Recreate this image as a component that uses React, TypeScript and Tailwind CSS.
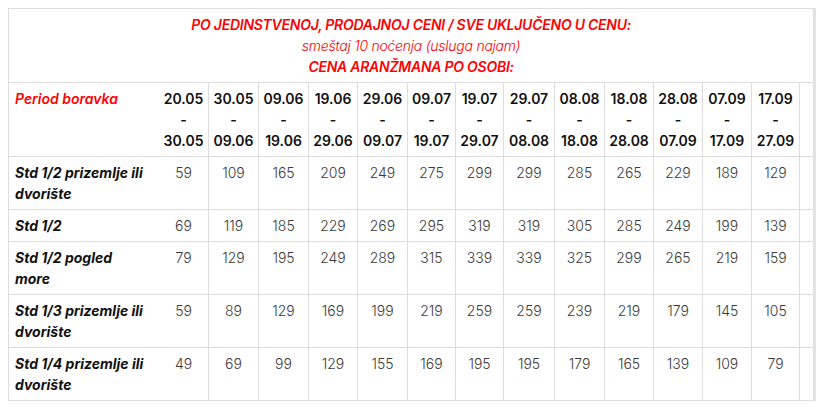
import React from "react";

const dates: [string, string][] = [
  ["20.05", "30.05"],
  ["30.05", "09.06"],
  ["09.06", "19.06"],
  ["19.06", "29.06"],
  ["29.06", "09.07"],
  ["09.07", "19.07"],
  ["19.07", "29.07"],
  ["29.07", "08.08"],
  ["08.08", "18.08"],
  ["18.08", "28.08"],
  ["28.08", "07.09"],
  ["07.09", "17.09"],
  ["17.09", "27.09"],
];

const rows: { label: string; values: number[] }[] = [
  { label: "Std 1/2 prizemlje ili dvorište", values: [59, 109, 165, 209, 249, 275, 299, 299, 285, 265, 229, 189, 129] },
  { label: "Std 1/2", values: [69, 119, 185, 229, 269, 295, 319, 319, 305, 285, 249, 199, 139] },
  { label: "Std 1/2 pogled more", values: [79, 129, 195, 249, 289, 315, 339, 339, 325, 299, 265, 219, 159] },
  { label: "Std 1/3 prizemlje ili dvorište", values: [59, 89, 129, 169, 199, 219, 259, 259, 239, 219, 179, 145, 105] },
  { label: "Std 1/4 prizemlje ili dvorište", values: [49, 69, 99, 129, 155, 169, 195, 195, 179, 165, 139, 109, 79] },
];

const colWidths = [
  "w-[150px]",
  "w-[50px]",
  "w-[50px]",
  "w-[50px]",
  "w-[49px]",
  "w-[50px]",
  "w-[48px]",
  "w-[48px]",
  "w-[51px]",
  "w-[50px]",
  "w-[49px]",
  "w-[49px]",
  "w-[49px]",
  "w-[48px]",
  "w-[14px]",
];

export default function App() {
  return (
    <div className="bg-white w-[824px] h-[407px] pt-2 pl-2 font-['Inter','Liberation_Sans',sans-serif] text-[14px] leading-[21px]">
      <div className="inline-block border-r-[2px] border-[#e4e4e4]">
        <table className="table-fixed border-separate border-spacing-0 w-[805px] border-t border-l border-[#dddddd]">
          <colgroup>
            {colWidths.map((w, i) => (
              <col key={i} className={w} />
            ))}
          </colgroup>
          <tbody>
            <tr>
              <td colSpan={15} className="border-r border-b border-[#dddddd] text-center text-[#ff0000] italic pt-[5px] pb-[5px] tracking-[-0.25px]">
                <div className="font-semibold">PO JEDINSTVENOJ, PRODAJNOJ CENI / SVE UKLJUČENO U CENU:</div>
                <div className="font-light">smeštaj 10 noćenja (usluga najam)</div>
                <div className="font-semibold">CENA ARANŽMANA PO OSOBI:</div>
              </td>
            </tr>
            <tr>
              <td className="border-b border-[#dddddd] align-top pl-[6px] pt-[5px] pb-[5px] text-[#ff0000] italic font-semibold">
                Period boravka
              </td>
              {dates.map(([a, b], i) => (
                <td key={i} className="border-r border-b border-[#dddddd] align-top text-center pt-[5px] pb-[5px] font-semibold text-[#111111]">
                  <div>{a}</div>
                  <div>-</div>
                  <div>{b}</div>
                </td>
              ))}
              <td className="border-r border-b border-[#dddddd]"></td>
            </tr>
            {rows.map((r, ri) => (
              <tr key={ri}>
                <td className="border-b border-[#dddddd] align-top pl-[6px] pr-[12px] pt-[5px] pb-[5px] italic font-bold text-[#111111]">
                  {r.label}
                </td>
                {r.values.map((v, vi) => (
                  <td key={vi} className="border-r border-b border-[#dddddd] align-top text-center pt-[5px] pb-[5px] font-light text-[#3a3a3a]">
                    {v}
                  </td>
                ))}
                <td className="border-r border-b border-[#dddddd]"></td>
              </tr>
            ))}
          </tbody>
        </table>
      </div>
    </div>
  );
}
